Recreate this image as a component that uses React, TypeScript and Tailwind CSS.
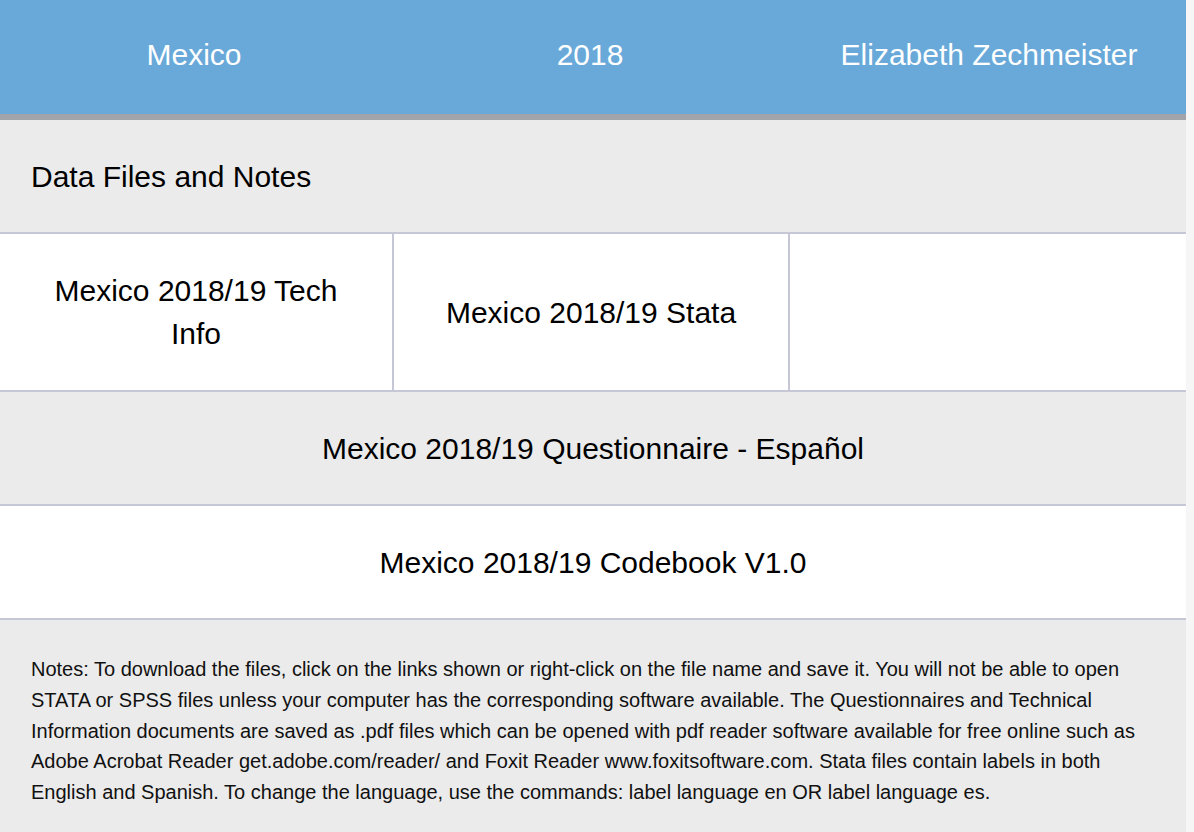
const files = [
  "Mexico 2018/19 Tech Info",
  "Mexico 2018/19 Stata",
  "",
];

export default function App() {
  return (
    <div
      className="flex min-h-[832px] w-full bg-[#f6f6f6] text-black"
      style={{ fontFamily: '"Liberation Sans", Arial, Helvetica, sans-serif' }}
    >
      <main className="w-[1186px] shrink-0 bg-[#ebebeb]">
        <header className="grid h-[120px] grid-cols-[388px_404px_1fr] items-center border-b-[6px] border-[#a1a5aa] bg-[#68a9d9] pb-[6px] text-center text-[30px] text-white">
          <div>Mexico</div>
          <div>2018</div>
          <div>Elizabeth Zechmeister</div>
        </header>

        <section className="border-b-2 border-[#c5c7d4] px-[31px] pb-[33px] pt-[35px] text-[30px] leading-[44px]">
          Data Files and Notes
        </section>

        <div className="grid grid-cols-[392px_396px_1fr] border-b-2 border-[#c5c7d4] bg-white">
          {files.map((f, i) => (
            <div
              key={i}
              className={`flex h-[156px] items-center justify-center px-10 text-center text-[30px] leading-[43px] ${
                i > 0 ? "border-l-2 border-[#c5c7d4]" : ""
              }`}
            >
              {f}
            </div>
          ))}
        </div>

        <div className="flex h-[114px] items-center justify-center border-b-2 border-[#c5c7d4] text-[30px]">
          Mexico 2018/19 Questionnaire - Español
        </div>

        <div className="flex h-[114px] items-center justify-center border-b-2 border-[#c5c7d4] bg-white text-[30px]">
          Mexico 2018/19 Codebook V1.0
        </div>

        <p className="px-[31px] pb-10 pt-[34px] text-[20px] leading-[30.75px] text-[#111]">
          Notes: To download the files, click on the links shown or right-click on the file name and save it. You will not be
          able to open STATA or SPSS files unless your computer has the corresponding software available. The Questionnaires
          and Technical Information documents are saved as .pdf files which can be opened with pdf reader software available
          for free online such as Adobe Acrobat Reader get.adobe.com/reader/ and Foxit Reader www.foxitsoftware.com. Stata
          files contain labels in both English and Spanish. To change the language, use the commands: label language en OR
          label language es.
        </p>
      </main>
      <div className="flex-1" />
    </div>
  );
}
